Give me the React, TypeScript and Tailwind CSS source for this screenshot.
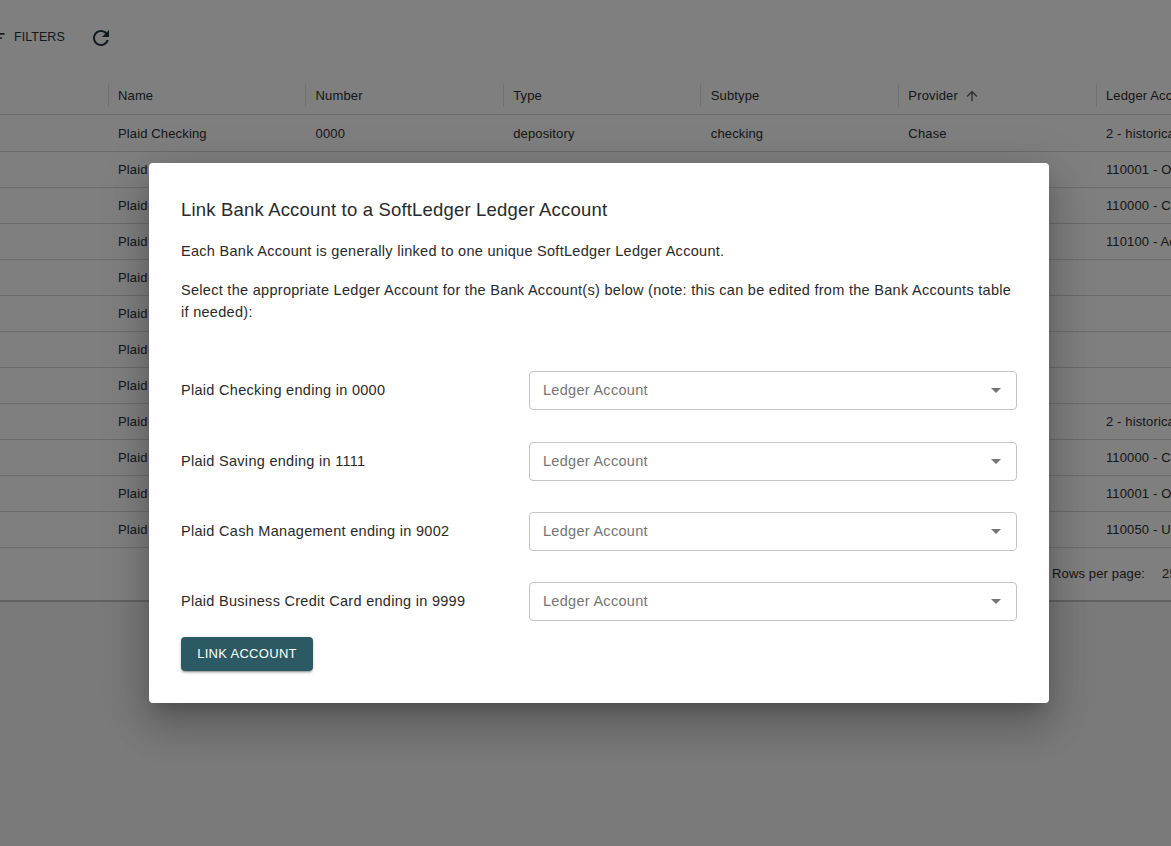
import React from 'react';

// rows sit behind the dialog, so only what shows past its edges is filled in
const rows = [
  { name: 'Plaid Checking', number: '0000', type: 'depository', subtype: 'checking', provider: 'Chase', ledger: '2 - historical' },
  { name: 'Plaid', ledger: '110001 - Operating' },
  { name: 'Plaid', ledger: '110000 - Cash' },
  { name: 'Plaid', ledger: '110100 - Accounts' },
  { name: 'Plaid', ledger: '' },
  { name: 'Plaid', ledger: '' },
  { name: 'Plaid', ledger: '' },
  { name: 'Plaid', ledger: '' },
  { name: 'Plaid', ledger: '2 - historical' },
  { name: 'Plaid', ledger: '110000 - Cash' },
  { name: 'Plaid', ledger: '110001 - Operating' },
  { name: 'Plaid', ledger: '110050 - Undeposited' },
];

const headers = ['Name', 'Number', 'Type', 'Subtype', 'Provider', 'Ledger Account'];

const accounts = [
  { label: 'Plaid Checking ending in 0000', cls: 'mt-[48px]' },
  { label: 'Plaid Saving ending in 1111', cls: 'mt-[32px]' },
  { label: 'Plaid Cash Management ending in 9002', cls: 'mt-[31px]' },
  { label: 'Plaid Business Credit Card ending in 9999', cls: 'mt-[31px]' },
];

function Grid({ children, className }: { children: React.ReactNode; className?: string }) {
  return (
    <div className={`grid grid-cols-[107.7px_repeat(6,197.6px)] w-[1300px] ${className ?? ''}`}>{children}</div>
  );
}

function Background() {
  return (
    <div className="w-[1171px] h-[846px] overflow-hidden bg-[#f4f4f4] text-[13px] tracking-[0.14px] text-[#2e2e2e]">
      <div className="bg-white border-b-2 border-[#c4c4c4] h-[602px]">
        <div className="h-[76px] pb-[1px] flex items-center">
          <svg viewBox="0 0 24 24" className="w-[20px] h-[20px] -ml-[13.5px] fill-[#2b3a3f]">
            <path d="M10 18h4v-2h-4v2zM3 6v2h18V6H3zm3 7h12v-2H6v2z" />
          </svg>
          <span className="ml-[7.5px] text-[12.5px] tracking-[0.05px] text-[#26343a]">FILTERS</span>
          <svg viewBox="0 0 24 24" className="w-[24px] h-[24px] ml-[24px] fill-[#26343a]">
            <path d="M17.65 6.35C16.2 4.9 14.21 4 12 4c-4.42 0-7.99 3.58-7.99 8s3.57 8 7.99 8c3.73 0 6.84-2.55 7.73-6h-2.08c-.82 2.33-3.04 4-5.65 4-3.31 0-6-2.69-6-6s2.69-6 6-6c1.66 0 3.14.69 4.22 1.78L13 11h7V4l-2.35 2.35z" />
          </svg>
        </div>
        <Grid className="h-[39px] items-center border-b border-[#d8d8d8]">
          <div />
          {headers.map((h) => (
            <div key={h} className="h-[23px] pt-[1px] flex items-center border-l border-[#e0e0e0] pl-[9.3px] whitespace-nowrap">
              {h}
              {h === 'Provider' && (
                <svg viewBox="0 0 24 24" className="w-[16px] h-[16px] ml-[6px] fill-[#5a5a5a]">
                  <path d="M4 12l1.41 1.41L11 7.83V20h2V7.83l5.58 5.59L20 12l-8-8-8 8z" />
                </svg>
              )}
            </div>
          ))}
        </Grid>
        {rows.map((r, i) => (
          <Grid key={i} className={`${i === 0 ? 'h-[37px] pt-[2px]' : 'h-[36px]'} items-center border-b border-[#d8d8d8]`}>
            <div />
            {[r.name, r.number, r.type, r.subtype, r.provider, r.ledger].map((c, j) => (
              <div key={j} className="pl-[10.3px] whitespace-nowrap">
                {c}
              </div>
            ))}
          </Grid>
        ))}
        <div className="h-[51px] flex items-center pl-[1052px] whitespace-nowrap">
          <span>Rows per page:</span>
          <span className="ml-[17px]">25</span>
        </div>
      </div>
    </div>
  );
}

function Select() {
  return (
    <div className="w-[488px] h-[39px] border border-[#c4c4c4] rounded-[4px] flex items-center justify-between pl-[13px] pr-[8px]">
      <span className="text-[#757575] text-[14.5px]">Ledger Account</span>
      <svg viewBox="0 0 24 24" className="w-[24px] h-[24px] -mt-[2px] fill-[#757575]">
        <path d="M7 10l5 5 5-5z" />
      </svg>
    </div>
  );
}

export default function App() {
  return (
    <div className="relative w-[1171px] h-[846px] overflow-hidden font-['Liberation_Sans',sans-serif]">
      <Background />
      <div className="absolute inset-0 bg-black/50 flex items-start justify-start">
        <div className="ml-[149px] mt-[163px] w-[900px] h-[540px] bg-white rounded-[4px] px-[32px] shadow-[0_11px_15px_-7px_rgba(0,0,0,0.2),0_24px_38px_3px_rgba(0,0,0,0.14),0_9px_46px_8px_rgba(0,0,0,0.12)] text-[#2a2a2a] text-[14.5px] tracking-[0.29px]">
          <h2 className="pt-[35px] text-[18.5px] leading-[24px] tracking-[0.18px]">
            Link Bank Account to a SoftLedger Ledger Account
          </h2>
          <p className="mt-[19px] leading-[20px]">
            Each Bank Account is generally linked to one unique SoftLedger Ledger Account.
          </p>
          <p className="mt-[18px] leading-[22px]">
            Select the appropriate Ledger Account for the Bank Account(s) below (note: this can be edited from the Bank
            Accounts table if needed):
          </p>
          {accounts.map((a) => (
            <div key={a.label} className={`flex items-center ${a.cls}`}>
              <div className="w-[348px]">{a.label}</div>
              <Select />
            </div>
          ))}
          <button className="mt-[16px] w-[132px] h-[34px] rounded-[4px] bg-[#2c5a64] text-white text-[13px] tracking-[0.3px] shadow-[0_3px_1px_-2px_rgba(0,0,0,0.2),0_2px_2px_0_rgba(0,0,0,0.14),0_1px_5px_0_rgba(0,0,0,0.12)]">
            LINK ACCOUNT
          </button>
        </div>
      </div>
    </div>
  );
}
